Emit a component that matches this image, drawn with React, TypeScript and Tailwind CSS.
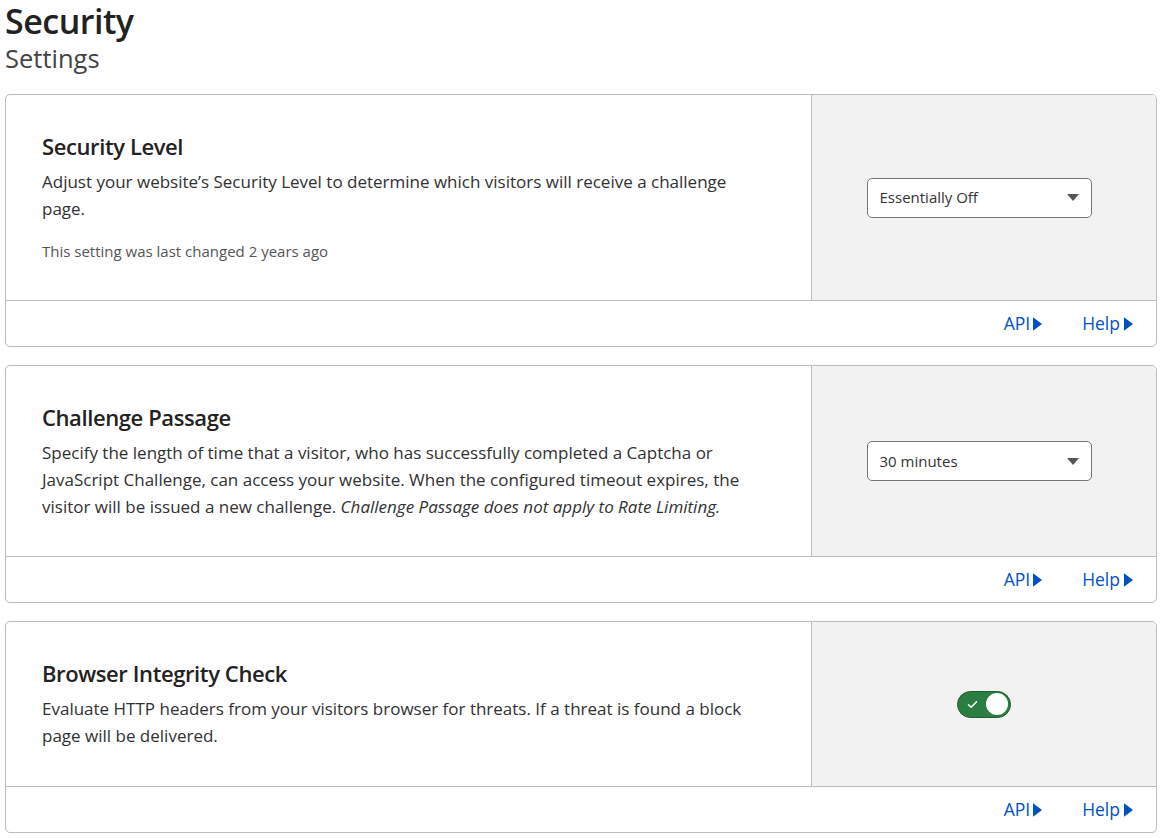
import React from "react";

const font = { fontFamily: '"Open Sans", "Noto Sans", sans-serif' };

function Caret({ className = "" }: { className?: string }) {
  return (
    <svg viewBox="0 0 8 12" className={className} fill="currentColor">
      <path d="M0 0 L8 6 L0 12 Z" />
    </svg>
  );
}

function Select({ value }: { value: string }) {
  return (
    <div className="mr-[10px] flex h-[40px] w-[225px] items-center justify-between rounded-[5px] border border-[#767676] bg-white pl-3 pr-[12px] text-[15px] text-[#333]">
      <span>{value}</span>
      <svg viewBox="0 0 12 7" className="h-[7px] w-[12px] text-[#555]" fill="currentColor">
        <path d="M0 0 H12 L6 7 Z" />
      </svg>
    </div>
  );
}

function Toggle() {
  return (
    <div className="flex h-[27px] w-[54px] items-center justify-between rounded-full border border-[#1d5e2f] bg-[#2b7d41] pl-[9px] pr-[2px]">
      <svg viewBox="0 0 12 10" className="h-[9px] w-[11px]" fill="none" stroke="white" strokeWidth="1.6" strokeLinecap="round" strokeLinejoin="round">
        <path d="M1.5 5.2 L4.5 8 L10.5 2" />
      </svg>
      <div className="h-[22px] w-[22px] rounded-full bg-white" />
    </div>
  );
}

function Card({
  title,
  children,
  control,
  bodyClass,
}: {
  title: string;
  children: React.ReactNode;
  control: React.ReactNode;
  bodyClass: string;
}) {
  return (
    <section className="overflow-hidden rounded-[5px] border border-[#bdbdbd] bg-white">
      <div className={`flex border-b border-[#bdbdbd] ${bodyClass}`}>
        <div className="flex-1 px-[36px] py-[36px]">
          <h2 className="mb-[7px] text-[22px] font-semibold leading-[30px] tracking-[-0.4px] text-[#222]">{title}</h2>
          {children}
        </div>
        <div className="flex w-[30%] items-center justify-center border-l border-[#bdbdbd] bg-[#f2f2f2]">
          {control}
        </div>
      </div>
      <div className="flex h-[45px] items-center justify-end gap-[40px] pr-[23px] text-[17.5px] text-[#0051c3]">
        <a className="flex items-center gap-[3px]">
          API
          <Caret className="h-[14px] w-[9px]" />
        </a>
        <a className="flex items-center gap-[4px]">
          Help
          <Caret className="h-[14px] w-[9px]" />
        </a>
      </div>
    </section>
  );
}

export default function App() {
  return (
    <div className="min-h-screen bg-white pl-[5px] pr-[14px] pb-[5px] text-[#313131]" style={font}>
      <h1 className="text-[34px] font-semibold leading-[42px] tracking-[-0.5px] text-[#222]">Security</h1>
      <p className="text-[25.5px] leading-[32px] text-[#444]">Settings</p>

      <div className="mt-[20px] flex flex-col gap-[18px]">
        <Card title="Security Level" control={<Select value="Essentially Off" />} bodyClass="h-[206px]">
          <p className="max-w-[718px] text-[17px] leading-[27px]">
            Adjust your website’s Security Level to determine which visitors will receive a challenge page.
          </p>
          <p className="mt-[19px] text-[15px] leading-[20px] text-[#555]">This setting was last changed 2 years ago</p>
        </Card>

        <Card title="Challenge Passage" control={<Select value="30 minutes" />} bodyClass="h-[191px]">
          <p className="max-w-[718px] text-[17px] leading-[27px]">
            Specify the length of time that a visitor, who has successfully completed a Captcha or JavaScript Challenge, can
            access your website. When the configured timeout expires, the visitor will be issued a new challenge.{" "}
            <em>Challenge Passage does not apply to Rate Limiting.</em>
          </p>
        </Card>

        <Card title="Browser Integrity Check" control={<Toggle />} bodyClass="h-[165px]">
          <p className="max-w-[718px] text-[17px] leading-[27px]">
            Evaluate HTTP headers from your visitors browser for threats. If a threat is found a block page will be
            delivered.
          </p>
        </Card>
      </div>
    </div>
  );
}
